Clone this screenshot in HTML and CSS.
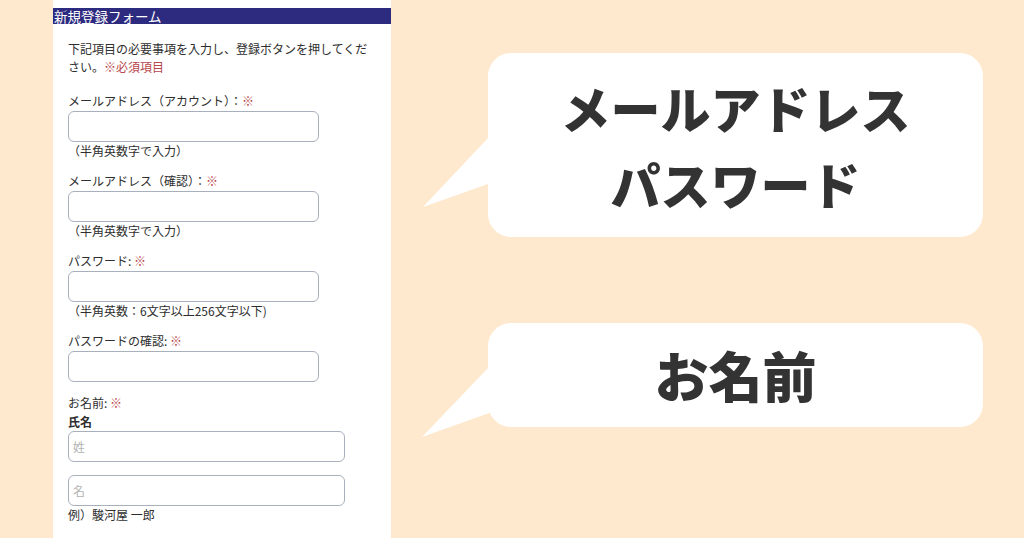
FILE: index.html
```html
<!DOCTYPE html>
<html lang="ja">
<head>
<meta charset="utf-8">
<title>新規登録フォーム</title>
<link rel="stylesheet" href="styles.css">
</head>
<body>
<div class="page">
  <section class="form-panel">
    <h1 class="form-title">新規登録フォーム</h1>
    <div class="form-body">
      <p class="intro"><span class="intro-line">下記項目の必要事項を入力し、登録ボタンを押してくだ</span><span class="intro-line">さい。<span class="req">※必須項目</span></span></p>

      <div class="field">
        <div class="label">メールアドレス（アカウント）：<span class="req">※</span></div>
        <input class="input" type="text">
        <div class="hint">（半角英数字で入力）</div>
      </div>

      <div class="field">
        <div class="label">メールアドレス（確認）：<span class="req">※</span></div>
        <input class="input" type="text">
        <div class="hint">（半角英数字で入力）</div>
      </div>

      <div class="field">
        <div class="label">パスワード: <span class="req">※</span></div>
        <input class="input" type="password">
        <div class="hint">（半角英数：6文字以上256文字以下)</div>
      </div>

      <div class="field">
        <div class="label">パスワードの確認: <span class="req">※</span></div>
        <input class="input" type="password">
      </div>

      <div class="field name-field">
        <div class="label">お名前: <span class="req">※</span></div>
        <div class="sublabel">氏名</div>
        <input class="input wide" type="text" placeholder="姓">
        <input class="input wide second" type="text" placeholder="名">
        <div class="example">例）駿河屋 一郎</div>
      </div>
    </div>
  </section>

  <section class="callouts">
    <div class="bubble bubble-large">
      <p class="bubble-text">メールアドレス<br>パスワード</p>
    </div>
    <div class="bubble bubble-small">
      <p class="bubble-text name">お名前</p>
    </div>
  </section>
</div>
</body>
</html>
```

FILE: styles.css
```css
* {
  box-sizing: border-box;
}

html, body {
  margin: 0;
  padding: 0;
}

body {
  width: 1024px;
  height: 538px;
  overflow: hidden;
  background: #fee9cf;
  font-family: "Noto Sans CJK JP", "Noto Sans", sans-serif;
  color: #2e2e2e;
}

.page {
  display: flex;
  height: 538px;
}

.form-panel {
  width: 338px;
  margin-left: 53px;
  background: #fff;
  padding-top: 8px;
}

.form-title {
  margin: 0;
  height: 16px;
  background: #2d2b80;
  color: #fff;
  font-size: 13.5px;
  font-weight: 400;
  line-height: 16px;
  padding-left: 1px;
  white-space: nowrap;
}

.form-body {
  padding: 16px 15px 0 15px;
  font-size: 12px;
  line-height: 18px;
}

.intro {
  margin: 0 0 16px 0;
  width: 300px;
  line-height: 18px;
}

.intro-line {
  display: block;
  white-space: nowrap;
}

.req {
  color: #b8474c;
  line-height: 18px;
}

.field {
  display: flex;
  flex-direction: column;
  align-items: flex-start;
  margin-bottom: 12px;
}

.label {
  line-height: 18px;
  margin-bottom: 1px;
  white-space: nowrap;
}

.sublabel {
  line-height: 18px;
  font-weight: 700;
}

.input {
  display: block;
  width: 251px;
  height: 31px;
  margin: 0;
  border: 1px solid #a9b0bd;
  border-radius: 6px;
  background: #fff;
  padding: 0 4px;
  font-family: inherit;
  font-size: 12px;
  color: #333;
  outline: none;
}

.input::placeholder {
  color: #b3b3b3;
}

.input.wide {
  width: 277px;
}

.input.second {
  margin-top: 13px;
}

.hint {
  line-height: 18px;
  white-space: nowrap;
}

.example {
  line-height: 18px;
}

.callouts {
  display: flex;
  flex-direction: column;
  gap: 86px;
  padding-top: 53px;
  margin-left: 97px;
}

.bubble {
  position: relative;
  width: 495px;
  background: #fff;
  border-radius: 23px;
  display: flex;
  align-items: center;
  justify-content: center;
}

.bubble::before {
  content: "";
  position: absolute;
  background: #fff;
}

.bubble-large {
  height: 184px;
}

.bubble-large::before {
  left: -65px;
  top: 85px;
  width: 70px;
  height: 69px;
  clip-path: polygon(65px 0, 70px 0, 70px 46px, 65px 46px, 0 69px);
}

.bubble-small {
  height: 104px;
}

.bubble-small::before {
  left: -66px;
  top: 45px;
  width: 72px;
  height: 69px;
  clip-path: polygon(66px 0, 72px 0, 72px 44px, 70px 44px, 0 69px);
}

.bubble-text {
  margin: 0;
  text-align: center;
  font-family: "Noto Sans CJK JP", sans-serif;
  font-weight: 900;
  font-size: 50px;
  line-height: 76px;
  color: #333;
}

.bubble-text.name {
  font-size: 54px;
  line-height: 76px;
}
```
